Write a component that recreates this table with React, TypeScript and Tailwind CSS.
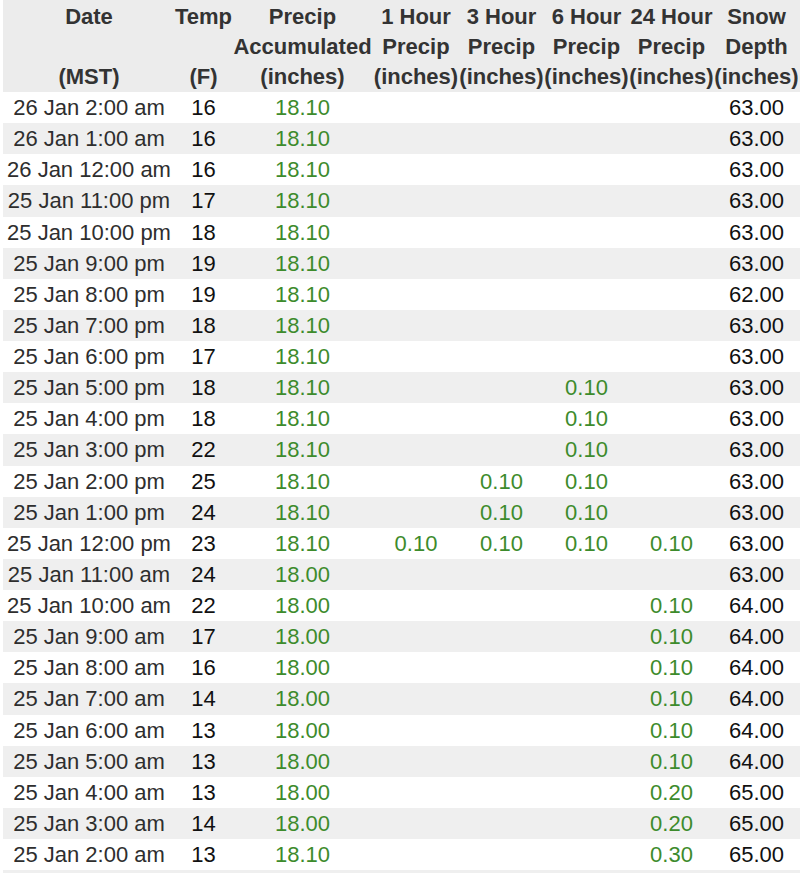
import React from "react";

type Row = [string, string, string, string, string, string, string, string];

const rows: Row[] = [
  ["26 Jan 2:00 am", "16", "18.10", "", "", "", "", "63.00"],
  ["26 Jan 1:00 am", "16", "18.10", "", "", "", "", "63.00"],
  ["26 Jan 12:00 am", "16", "18.10", "", "", "", "", "63.00"],
  ["25 Jan 11:00 pm", "17", "18.10", "", "", "", "", "63.00"],
  ["25 Jan 10:00 pm", "18", "18.10", "", "", "", "", "63.00"],
  ["25 Jan 9:00 pm", "19", "18.10", "", "", "", "", "63.00"],
  ["25 Jan 8:00 pm", "19", "18.10", "", "", "", "", "62.00"],
  ["25 Jan 7:00 pm", "18", "18.10", "", "", "", "", "63.00"],
  ["25 Jan 6:00 pm", "17", "18.10", "", "", "", "", "63.00"],
  ["25 Jan 5:00 pm", "18", "18.10", "", "", "0.10", "", "63.00"],
  ["25 Jan 4:00 pm", "18", "18.10", "", "", "0.10", "", "63.00"],
  ["25 Jan 3:00 pm", "22", "18.10", "", "", "0.10", "", "63.00"],
  ["25 Jan 2:00 pm", "25", "18.10", "", "0.10", "0.10", "", "63.00"],
  ["25 Jan 1:00 pm", "24", "18.10", "", "0.10", "0.10", "", "63.00"],
  ["25 Jan 12:00 pm", "23", "18.10", "0.10", "0.10", "0.10", "0.10", "63.00"],
  ["25 Jan 11:00 am", "24", "18.00", "", "", "", "", "63.00"],
  ["25 Jan 10:00 am", "22", "18.00", "", "", "", "0.10", "64.00"],
  ["25 Jan 9:00 am", "17", "18.00", "", "", "", "0.10", "64.00"],
  ["25 Jan 8:00 am", "16", "18.00", "", "", "", "0.10", "64.00"],
  ["25 Jan 7:00 am", "14", "18.00", "", "", "", "0.10", "64.00"],
  ["25 Jan 6:00 am", "13", "18.00", "", "", "", "0.10", "64.00"],
  ["25 Jan 5:00 am", "13", "18.00", "", "", "", "0.10", "64.00"],
  ["25 Jan 4:00 am", "13", "18.00", "", "", "", "0.20", "65.00"],
  ["25 Jan 3:00 am", "14", "18.00", "", "", "", "0.20", "65.00"],
  ["25 Jan 2:00 am", "13", "18.10", "", "", "", "0.30", "65.00"],
  ["25 Jan 1:00 am", "13", "18.10", "", "", "", "0.30", "65.00"],
];

const headers: [string, string, string][] = [
  ["Date", "\u00a0", "(MST)"],
  ["Temp", "\u00a0", "(F)"],
  ["Precip", "Accumulated", "(inches)"],
  ["1 Hour", "Precip", "(inches)"],
  ["3 Hour", "Precip", "(inches)"],
  ["6 Hour", "Precip", "(inches)"],
  ["24 Hour", "Precip", "(inches)"],
  ["Snow", "Depth", "(inches)"],
  ["Snow", "Interval", "(inches)"],
];

export default function App() {
  return (
    <div
      className="w-[800px] h-[873px] overflow-hidden bg-white"
      style={{ fontFamily: '"Liberation Sans", Arial, Helvetica, sans-serif' }}
    >
      <table className="ml-[3px] table-fixed border-collapse w-[881px] text-[22px]">
        <colgroup>
          <col className="w-[172px]" />
          <col className="w-[57px]" />
          <col className="w-[141px]" />
          <col className="w-[86px]" />
          <col className="w-[85px]" />
          <col className="w-[85px]" />
          <col className="w-[85px]" />
          <col className="w-[85px]" />
          <col className="w-[85px]" />
        </colgroup>
        <thead>
          <tr className="bg-[#ececec]">
            {headers.map((h, i) => (
              <th
                key={i}
                className="p-0 pt-[2px] h-[92px] text-center font-bold text-[#333333] leading-[30px] whitespace-nowrap align-top"
              >
                <div>{h[0]}</div>
                <div>{h[1]}</div>
                <div>{h[2]}</div>
              </th>
            ))}
          </tr>
        </thead>
        <tbody>
          {rows.map((r, i) => (
            <tr key={i} className={i % 2 === 1 ? "bg-[#efefef]" : "bg-white"}>
              <td className="p-0 h-[31.125px] leading-[31px] text-center whitespace-nowrap text-[#2e2e2e]">
                {r[0]}
              </td>
              <td className="p-0 h-[31.125px] leading-[31px] text-center whitespace-nowrap text-[#111111]">
                {r[1]}
              </td>
              {[2, 3, 4, 5, 6].map((c) => (
                <td
                  key={c}
                  className="p-0 h-[31.125px] leading-[31px] text-center whitespace-nowrap text-[#3d8b2c]"
                >
                  {r[c]}
                </td>
              ))}
              <td className="p-0 h-[31.125px] leading-[31px] text-center whitespace-nowrap text-[#111111]">
                {r[7]}
              </td>
              <td className="p-0 h-[31.125px]"></td>
            </tr>
          ))}
        </tbody>
      </table>
    </div>
  );
}
